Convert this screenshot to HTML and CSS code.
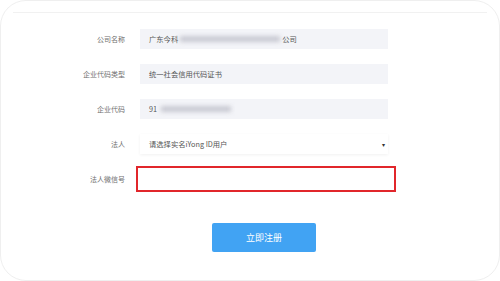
FILE: index.html
```html
<!DOCTYPE html>
<html lang="zh">
  <head>
    <meta charset="UTF-8" />
    <title>企业注册</title>
    <link rel="stylesheet" href="styles.css">
  </head>
  <body>
    <div class="frame">
      <div class="topline"></div>
      <!-- 注册表单 -->
      <div class="form">
        <div class="row">
          <label class="lab">公司名称</label>
          <div class="field">广东今科<span class="blur w1"></span>公司</div>
        </div>
        <div class="row">
          <label class="lab">企业代码类型</label>
          <div class="field">统一社会信用代码证书</div>
        </div>
        <div class="row">
          <label class="lab">企业代码</label>
          <div class="field">91<span class="blur w2"></span></div>
        </div>
        <div class="row">
          <label class="lab">法人</label>
          <div class="field sel">请选择实名iYong ID用户<span class="caret">▾</span></div>
        </div>
        <div class="row row-wx">
          <label class="lab">法人微信号</label>
          <div class="field wx"></div>
        </div>
        <div class="row row-btn">
          <span class="lab"></span>
          <div class="btn-wrap"><button class="btn">立即注册</button></div>
        </div>
      </div>
    </div>
  </body>
</html>
```
FILE: styles.css
```css
html,
body {
  margin: 0;
  background: #fff;
  font-family: "Noto Sans CJK SC", "Noto Sans", sans-serif;
}

.frame {
  height: 279px;
  border: 1px solid #efefef;
  border-radius: 26px;
  overflow: hidden;
}
.topline {
  height: 11px;
  border-bottom: 1px solid #f1f1f1;
  margin: 0 12px;
}

.form {
  padding-top: 16px;
}
.row {
  display: flex;
  align-items: center;
  margin-bottom: 15px;
}
.lab {
  width: 139px;
  padding-right: 15px;
  box-sizing: border-box;
  text-align: right;
  font-size: 7px;
  color: #707070;
}
.field {
  width: 248px;
  height: 20px;
  box-sizing: border-box;
  padding-left: 9px;
  display: flex;
  align-items: center;
  background: #f3f4f8;
  font-size: 7.3px;
  color: #555;
}
/* 모자이크 */
.blur {
  display: inline-block;
  height: 6px;
  background: #c9cad3;
  filter: blur(2px);
  margin: 0 2px;
}
.w1 {
  width: 100px;
}
.w2 {
  width: 70px;
  margin-left: 4px;
}

.sel {
  background: #fff;
  box-shadow: 0 1px 3px rgba(0, 0, 0, 0.06);
  position: relative;
}
.caret {
  position: absolute;
  right: 3px;
  font-size: 6px;
  color: #333;
}

.row-wx {
  margin-top: -3px;
  margin-bottom: 31px;
}
.wx {
  width: 260px;
  height: 26px;
  margin-left: -4px;
  background: #fff;
  border: 2px solid #e1262b;
}

.btn-wrap {
  width: 248px;
  display: flex;
  justify-content: center;
}
.btn {
  width: 104px;
  height: 29px;
  border: 0;
  border-radius: 2px;
  background: #41a3f3;
  color: #fff;
  font-family: "Noto Sans CJK SC", sans-serif;
  font-size: 9px;
}
```
